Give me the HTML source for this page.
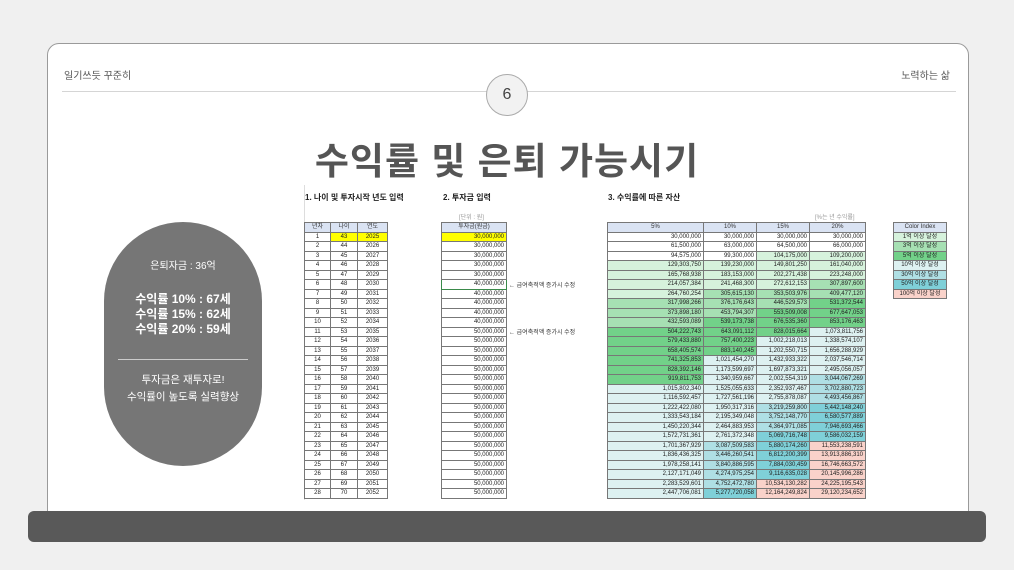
<!DOCTYPE html>
<html><head><meta charset="utf-8"><style>
*{margin:0;padding:0;box-sizing:border-box}
body{width:1014px;height:570px;background:#f0f0f0;position:relative;overflow:hidden;font-family:"Liberation Sans","Noto Sans CJK KR",sans-serif}
.card{position:absolute;left:47px;top:43px;width:922px;height:490px;background:#fff;border:1px solid #9a9a9a;border-radius:12px}
.bar{position:absolute;left:28px;top:511px;width:958px;height:31px;background:#595959;border-radius:6px}
.hl{position:absolute;left:62px;top:91px;width:894px;height:1px;background:#d5d5d5}
.ht{position:absolute;top:67px;font-size:10px;color:#555}
.num{position:absolute;left:486px;top:74px;width:42px;height:42px;border-radius:50%;background:#f2f2f2;border:1.5px solid #aaa;text-align:center;line-height:39px;font-size:16px;color:#444}
.title{position:absolute;left:0;width:1014px;top:131px;text-align:center;font-size:37px;font-weight:bold;color:#555;letter-spacing:1px}
.pill{position:absolute;left:104px;top:222px;width:158px;height:244px;border-radius:79px;background:#767676;color:#fff;text-align:center}
.sec{position:absolute;top:192px;font-size:8px;font-weight:bold;color:#222}
.sm{position:absolute;top:212px;font-size:6px;color:#999}
table{position:absolute;border-collapse:collapse;table-layout:fixed;font-size:6px;color:#222}
td{height:9.5px;line-height:8px;border:1px solid #777;padding:0 2px;white-space:nowrap;overflow:hidden}
.c td{text-align:center}
.r td{text-align:right}
th{height:9.5px;line-height:8px;border:1px solid #777;background:#dae3f3;font-weight:normal;color:#333}
.y{background:#ffff00}
.a{background:#d6f2dc}.b{background:#a6e0b3}.c1{background:#72d189}.d{background:#ddf1f1}.e{background:#afdfe4}.f{background:#7fd0d8}.g{background:#f9d2ca}
.ann{position:absolute;left:509px;font-size:6px;color:#333}
</style></head><body>
<div class="card"></div>
<div class="hl"></div>
<div class="ht" style="left:64px">일기쓰듯 꾸준히</div>
<div class="ht" style="right:64px">노력하는 삶</div>
<div class="num">6</div>
<div class="title">수익률 및 은퇴 가능시기</div>
<div class="pill">
<div style="position:absolute;top:35px;width:100%;font-size:10px">은퇴자금 : 36억</div>
<div style="position:absolute;top:70px;width:100%;font-size:12px;font-weight:bold;line-height:15px">수익률 10% : 67세<br>수익률 15% : 62세<br>수익률 20% : 59세</div>
<div style="position:absolute;top:137px;left:14px;width:130px;height:1px;background:#ccc"></div>
<div style="position:absolute;top:150px;width:100%;font-size:10.5px;line-height:17px">투자금은 재투자로!<br>수익률이 높도록 실력향상</div>
</div>
<div style="position:absolute;left:304px;top:185px;width:1px;height:315px;background:#ddd"></div>
<div class="sec" style="left:305px">1. 나이 및 투자시작 년도 입력</div>
<div class="sec" style="left:443px">2. 투자금 입력</div>
<div class="sec" style="left:608px">3. 수익률에 따른 자산</div>
<div class="sm" style="left:459px">[단위 : 원]</div>
<div class="sm" style="left:815px">[%는 년 수익률]</div>

<table class="c" style="left:304px;top:222px;width:83px">
<colgroup><col style="width:26px"><col style="width:27px"><col style="width:30px"></colgroup>
<tr><th>년차</th><th>나이</th><th>연도</th></tr>
<tr><td>1</td><td class="y">43</td><td class="y">2025</td></tr>
<tr><td>2</td><td>44</td><td>2026</td></tr><tr><td>3</td><td>45</td><td>2027</td></tr><tr><td>4</td><td>46</td><td>2028</td></tr><tr><td>5</td><td>47</td><td>2029</td></tr><tr><td>6</td><td>48</td><td>2030</td></tr><tr><td>7</td><td>49</td><td>2031</td></tr><tr><td>8</td><td>50</td><td>2032</td></tr><tr><td>9</td><td>51</td><td>2033</td></tr><tr><td>10</td><td>52</td><td>2034</td></tr><tr><td>11</td><td>53</td><td>2035</td></tr><tr><td>12</td><td>54</td><td>2036</td></tr><tr><td>13</td><td>55</td><td>2037</td></tr><tr><td>14</td><td>56</td><td>2038</td></tr><tr><td>15</td><td>57</td><td>2039</td></tr><tr><td>16</td><td>58</td><td>2040</td></tr><tr><td>17</td><td>59</td><td>2041</td></tr><tr><td>18</td><td>60</td><td>2042</td></tr><tr><td>19</td><td>61</td><td>2043</td></tr><tr><td>20</td><td>62</td><td>2044</td></tr><tr><td>21</td><td>63</td><td>2045</td></tr><tr><td>22</td><td>64</td><td>2046</td></tr><tr><td>23</td><td>65</td><td>2047</td></tr><tr><td>24</td><td>66</td><td>2048</td></tr><tr><td>25</td><td>67</td><td>2049</td></tr><tr><td>26</td><td>68</td><td>2050</td></tr><tr><td>27</td><td>69</td><td>2051</td></tr><tr><td>28</td><td>70</td><td>2052</td></tr>
</table>

<table class="r" style="left:441px;top:222px;width:66px">
<tr><th>투자금(원금)</th></tr>
<tr><td class="y">30,000,000</td></tr><tr><td>30,000,000</td></tr><tr><td>30,000,000</td></tr><tr><td>30,000,000</td></tr><tr><td>30,000,000</td></tr>
<tr><td style="border:1px solid #3a8a4a">40,000,000</td></tr><tr><td>40,000,000</td></tr><tr><td>40,000,000</td></tr><tr><td>40,000,000</td></tr><tr><td>40,000,000</td></tr>
<tr><td>50,000,000</td></tr><tr><td>50,000,000</td></tr><tr><td>50,000,000</td></tr><tr><td>50,000,000</td></tr><tr><td>50,000,000</td></tr><tr><td>50,000,000</td></tr><tr><td>50,000,000</td></tr><tr><td>50,000,000</td></tr><tr><td>50,000,000</td></tr><tr><td>50,000,000</td></tr><tr><td>50,000,000</td></tr><tr><td>50,000,000</td></tr><tr><td>50,000,000</td></tr><tr><td>50,000,000</td></tr><tr><td>50,000,000</td></tr><tr><td>50,000,000</td></tr><tr><td>50,000,000</td></tr><tr><td>50,000,000</td></tr>
</table>
<div class="ann" style="top:280px">← 급여축적액 증가시 수정</div>
<div class="ann" style="top:327px">← 급여축적액 증가시 수정</div>

<table class="r" style="left:607px;top:222px;width:258px">
<colgroup><col style="width:96px"><col style="width:53px"><col style="width:53px"><col style="width:56px"></colgroup>
<tr><th>5%</th><th>10%</th><th>15%</th><th>20%</th></tr>
<tr><td>30,000,000</td><td>30,000,000</td><td>30,000,000</td><td>30,000,000</td></tr>
<tr><td>61,500,000</td><td>63,000,000</td><td>64,500,000</td><td>66,000,000</td></tr>
<tr><td>94,575,000</td><td>99,300,000</td><td class="a">104,175,000</td><td class="a">109,200,000</td></tr>
<tr><td class="a">129,303,750</td><td class="a">139,230,000</td><td class="a">149,801,250</td><td class="a">161,040,000</td></tr>
<tr><td class="a">165,768,938</td><td class="a">183,153,000</td><td class="a">202,271,438</td><td class="a">223,248,000</td></tr>
<tr><td class="a">214,057,384</td><td class="a">241,468,300</td><td class="a">272,612,153</td><td class="b">307,897,600</td></tr>
<tr><td class="a">264,760,254</td><td class="b">305,615,130</td><td class="b">353,503,976</td><td class="b">409,477,120</td></tr>
<tr><td class="b">317,998,266</td><td class="b">376,176,643</td><td class="b">446,529,573</td><td class="c1">531,372,544</td></tr>
<tr><td class="b">373,898,180</td><td class="b">453,794,307</td><td class="c1">553,509,008</td><td class="c1">677,647,053</td></tr>
<tr><td class="b">432,593,089</td><td class="c1">539,173,738</td><td class="c1">676,535,360</td><td class="c1">853,176,463</td></tr>
<tr><td class="c1">504,222,743</td><td class="c1">643,091,112</td><td class="c1">828,015,664</td><td class="d">1,073,811,756</td></tr>
<tr><td class="c1">579,433,880</td><td class="c1">757,400,223</td><td class="d">1,002,218,013</td><td class="d">1,338,574,107</td></tr>
<tr><td class="c1">658,405,574</td><td class="c1">883,140,245</td><td class="d">1,202,550,715</td><td class="d">1,656,288,929</td></tr>
<tr><td class="c1">741,325,853</td><td class="d">1,021,454,270</td><td class="d">1,432,933,322</td><td class="d">2,037,546,714</td></tr>
<tr><td class="c1">828,392,146</td><td class="d">1,173,599,697</td><td class="d">1,697,873,321</td><td class="d">2,495,056,057</td></tr>
<tr><td class="c1">919,811,753</td><td class="d">1,340,959,667</td><td class="d">2,002,554,319</td><td class="e">3,044,067,269</td></tr>
<tr><td class="d">1,015,802,340</td><td class="d">1,525,055,633</td><td class="d">2,352,937,467</td><td class="e">3,702,880,723</td></tr>
<tr><td class="d">1,116,592,457</td><td class="d">1,727,561,196</td><td class="d">2,755,878,087</td><td class="e">4,493,456,867</td></tr>
<tr><td class="d">1,222,422,080</td><td class="d">1,950,317,316</td><td class="e">3,219,259,800</td><td class="f">5,442,148,240</td></tr>
<tr><td class="d">1,333,543,184</td><td class="d">2,195,349,048</td><td class="e">3,752,148,770</td><td class="f">6,580,577,889</td></tr>
<tr><td class="d">1,450,220,344</td><td class="d">2,464,883,953</td><td class="e">4,364,971,085</td><td class="f">7,946,693,466</td></tr>
<tr><td class="d">1,572,731,361</td><td class="d">2,761,372,348</td><td class="f">5,069,716,748</td><td class="f">9,586,032,159</td></tr>
<tr><td class="d">1,701,367,929</td><td class="e">3,087,509,583</td><td class="f">5,880,174,260</td><td class="g">11,553,238,591</td></tr>
<tr><td class="d">1,836,436,325</td><td class="e">3,446,260,541</td><td class="f">6,812,200,399</td><td class="g">13,913,886,310</td></tr>
<tr><td class="d">1,978,258,141</td><td class="e">3,840,886,595</td><td class="f">7,884,030,459</td><td class="g">16,746,663,572</td></tr>
<tr><td class="d">2,127,171,049</td><td class="e">4,274,975,254</td><td class="f">9,116,635,028</td><td class="g">20,145,996,286</td></tr>
<tr><td class="d">2,283,529,601</td><td class="e">4,752,472,780</td><td class="g">10,534,130,282</td><td class="g">24,225,195,543</td></tr>
<tr><td class="d">2,447,706,081</td><td class="f">5,277,720,058</td><td class="g">12,164,249,824</td><td class="g">29,120,234,652</td></tr>
</table>

<table class="c" style="left:893px;top:222px;width:54px">
<tr><th>Color Index</th></tr>
<tr><td class="a">1억 이상 달성</td></tr>
<tr><td class="b">3억 이상 달성</td></tr>
<tr><td class="c1">5억 이상 달성</td></tr>
<tr><td class="d">10억 이상 달성</td></tr>
<tr><td class="e">30억 이상 달성</td></tr>
<tr><td class="f">50억 이상 달성</td></tr>
<tr><td class="g">100억 이상 달성</td></tr>
</table>
<div class="bar"></div>
</body></html>
